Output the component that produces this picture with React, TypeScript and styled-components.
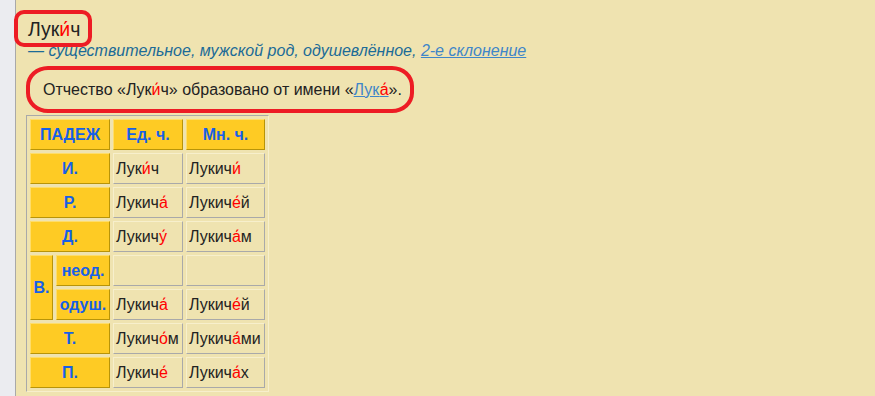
import React from "react";
import styled, { createGlobalStyle } from "styled-components";

const Global = createGlobalStyle`
  html, body { margin: 0; padding: 0; }
  body { font-family: "Liberation Sans", Arial, sans-serif; background: #efe3b0; }
`;

const Page = styled.div`
  display: flex;
  height: 396px;
  overflow: hidden;
`;

const Sidebar = styled.div`
  width: 15px;
  flex: none;
  background: #ebecf0;
  border-right: 1px solid #a9a9a9;
`;

const Content = styled.div`
  flex: 1;
  background: #efe3b0;
  padding: 17px 0 0 12px;
  color: #222;
`;

const Heading = styled.div`
  position: relative;
  display: inline-block;
  font-size: 19.5px;
  line-height: 25px;
  color: #222;
`;

const Annotation = styled.span<{ $t: number; $l: number; $r: number; $b: number; $rad: string }>`
  position: absolute;
  top: ${(p) => p.$t}px;
  left: ${(p) => p.$l}px;
  right: ${(p) => p.$r}px;
  bottom: ${(p) => p.$b}px;
  border: 4px solid #ed1c24;
  border-radius: ${(p) => p.$rad};
  pointer-events: none;
`;

const Accent = styled.span`
  color: #f00;
`;

const Grammar = styled.div`
  font-size: 16px;
  line-height: 18px;
  font-style: italic;
  color: #1c6b97;
`;

const GLink = styled.a`
  color: #3f86c8;
  text-decoration: underline;
`;

const Note = styled.div`
  position: relative;
  display: inline-block;
  margin: 12px 0 0 0;
  padding: 8px 0 7px 15px;
  font-size: 16px;
  line-height: 20px;
  color: #222;
`;

const NLink = styled.a`
  color: #3f86c8;
  text-decoration: underline;
`;

const Table = styled.table`
  margin: 8px 0 0 -2px;
  border-collapse: separate;
  border-spacing: 3px;
  border: 1px solid;
  border-color: #a9a9a9 #f7efcc #f7efcc #a9a9a9;
  font-size: 16px;
`;

const Th = styled.th<{ $w?: number }>`
  background: #fecb24;
  color: #1660e8;
  font-weight: bold;
  border: 1px solid;
  border-color: #fedd6a #b89408 #b89408 #fedd6a;
  height: 29px;
  padding: 0;
  text-align: center;
  vertical-align: middle;
  ${(p) => (p.$w ? `width: ${p.$w - 2}px;` : "")}
`;

const Td = styled.td`
  border: 1px solid;
  border-color: #f7efcc #a9a9a9 #a9a9a9 #f7efcc;
  height: 29px;
  padding: 0 0 0 2px;
  color: #222;
  vertical-align: middle;
  white-space: nowrap;
`;

const Form = ({ base, acc, tail }: { base: string; acc: string; tail?: string }) => (
  <>
    {base}
    <Accent>{acc}</Accent>
    {tail}
  </>
);

export default function App() {
  return (
    <>
      <Global />
      <Page>
        <Sidebar />
        <Content>
          <Heading>
            Лук<Accent>и́</Accent>ч
            <Annotation $t={-7} $l={-14} $r={-12} $b={-5} $rad="10px" />
          </Heading>
          <Grammar>
            — существительное, мужской род, одушевлённое, <GLink href="#">2-е склонение</GLink>
          </Grammar>
          <Note>
            Отчество «Лук<Accent>и́</Accent>ч» образовано от имени «
            <NLink href="#">
              Лук<Accent>а́</Accent>
            </NLink>
            ».
            <Annotation $t={-6} $l={-2} $r={-12} $b={-6} $rad="22px / 20px" />
          </Note>
          <Table>
            <tbody>
              <tr>
                <Th colSpan={2} $w={80}>ПАДЕЖ</Th>
                <Th $w={70}>Ед. ч.</Th>
                <Th $w={79}>Мн. ч.</Th>
              </tr>
              <tr>
                <Th colSpan={2}>И.</Th>
                <Td><Form base="Лук" acc="и́" tail="ч" /></Td>
                <Td><Form base="Лукич" acc="и́" /></Td>
              </tr>
              <tr>
                <Th colSpan={2}>Р.</Th>
                <Td><Form base="Лукич" acc="а́" /></Td>
                <Td><Form base="Лукич" acc="е́" tail="й" /></Td>
              </tr>
              <tr>
                <Th colSpan={2}>Д.</Th>
                <Td><Form base="Лукич" acc="у́" /></Td>
                <Td><Form base="Лукич" acc="а́" tail="м" /></Td>
              </tr>
              <tr>
                <Th rowSpan={2} $w={23}>В.</Th>
                <Th $w={54}>неод.</Th>
                <Td></Td>
                <Td></Td>
              </tr>
              <tr>
                <Th>одуш.</Th>
                <Td><Form base="Лукич" acc="а́" /></Td>
                <Td><Form base="Лукич" acc="е́" tail="й" /></Td>
              </tr>
              <tr>
                <Th colSpan={2}>Т.</Th>
                <Td><Form base="Лукич" acc="о́" tail="м" /></Td>
                <Td><Form base="Лукич" acc="а́" tail="ми" /></Td>
              </tr>
              <tr>
                <Th colSpan={2}>П.</Th>
                <Td><Form base="Лукич" acc="е́" /></Td>
                <Td><Form base="Лукич" acc="а́" tail="х" /></Td>
              </tr>
            </tbody>
          </Table>
        </Content>
      </Page>
    </>
  );
}
